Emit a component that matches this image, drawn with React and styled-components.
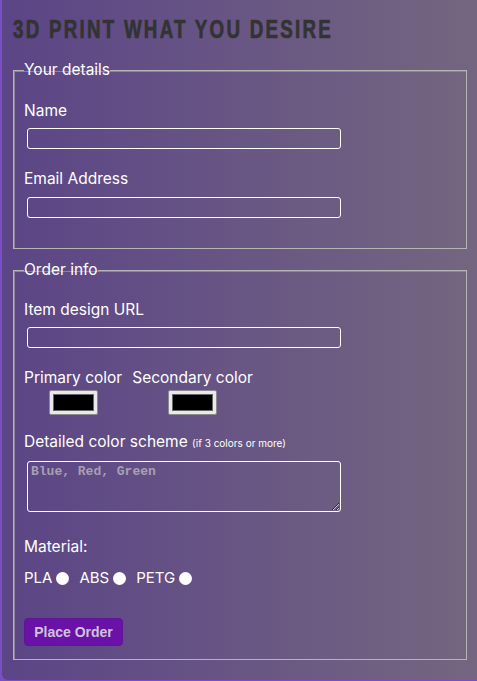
import React from 'react';
import styled, { createGlobalStyle } from 'styled-components';

const Global = createGlobalStyle`
  html, body {
    margin: 0;
    padding: 0;
    background: #7a4fc6;
  }
`;

const Page = styled.div`
  margin: 0 0 2px 2px;
  min-height: 679px;
  box-sizing: border-box;
  padding: 0 10px 20px 11px;
  border-bottom-left-radius: 6px;
  background: linear-gradient(90deg, #5b4586 0%, #675484 45%, #746680 100%);
  font-family: Inter, "Open Sans", sans-serif;
  color: #fff;
`;

const Title = styled.h1`
  margin: 0;
  padding: 15px 0 18px 0;
  font-family: "Liberation Sans", Arial, sans-serif;
  font-weight: 700;
  font-size: 25px;
  line-height: 28px;
  letter-spacing: 3px;
  color: #333;
  -webkit-text-stroke: 0.7px #333;
  text-transform: uppercase;
  white-space: nowrap;
  transform: scaleX(0.75);
  transform-origin: left center;
`;

const Set = styled.fieldset`
  margin: 0 0 ${p => p.$gap || 0}px 0;
  padding: 0 10px ${p => p.$bottom}px 10px;
  border: 1px solid #b5b5b5;
  box-shadow: inset 1px 1px 0 #8d8592;
  min-width: 0;
`;

const Legend = styled.legend`
  padding: 0;
  margin-left: 0;
  font-size: 15.5px;
  line-height: 18px;
  color: #fff;
`;

const Label = styled.div`
  margin-top: ${p => p.$top}px;
  padding-top: 1px;
  font-size: 15.5px;
  line-height: 18px;
  color: #fff;
`;

const Small = styled.span`
  font-size: 10px;
`;

const TextInput = styled.input`
  display: block;
  box-sizing: border-box;
  width: 314px;
  height: 21px;
  margin: ${p => p.$top}px 0 0 3px;
  background: transparent;
  border: 1px solid #fff;
  border-radius: 3px;
  color: #fff;
  outline: none;
`;

const TextArea = styled.textarea`
  display: block;
  box-sizing: border-box;
  width: 314px;
  height: 51px;
  margin: 9px 0 0 3px;
  padding: 2px 3px;
  background: transparent;
  border: 1px solid #fff;
  border-radius: 3px;
  font-family: "Liberation Mono", monospace;
  font-size: 13px;
  font-weight: 700;
  color: #fff;
  resize: vertical;
  &::placeholder {
    color: #a99fb3;
  }
`;

const Colors = styled.div`
  display: flex;
  gap: 10px;
  margin-top: 20px;
`;

const ColorCol = styled.div`
  display: flex;
  flex-direction: column;
  align-items: center;
`;

const Swatch = styled.div`
  box-sizing: border-box;
  width: 49px;
  height: 25px;
  margin-top: 3px;
  padding: 3px 3px;
  background: #e9e9ed;
  border: 1px solid #8c8c8c;
  border-radius: 2px;
  &::after {
    content: '';
    display: block;
    height: 100%;
    background: #000;
    border: 1px solid #666;
    box-sizing: border-box;
  }
`;

const Radios = styled.div`
  display: flex;
  align-items: center;
  margin-top: 13px;
  font-size: 15px;
  line-height: 18px;
`;

const RadioLabel = styled.label`
  display: flex;
  align-items: center;
  margin-right: 10px;
`;

const Radio = styled.span`
  display: inline-block;
  width: 13px;
  height: 13px;
  margin-left: 4px;
  border-radius: 50%;
  background: #fff;
`;

const Button = styled.button`
  display: block;
  margin-top: 31px;
  width: 99px;
  height: 28px;
  padding: 0;
  background: #6a11a8;
  border: 1px solid #5e1596;
  border-radius: 4px;
  color: #cfc4d9;
  font-family: "Liberation Sans", Arial, sans-serif;
  font-weight: 700;
  font-size: 14px;
`;

export default function App() {
  return (
    <>
      <Global />
      <Page>
        <Title>3D Print What You Desire</Title>
        <Set $gap={12} $bottom={30}>
          <Legend>Your details</Legend>
          <Label $top={22}>Name</Label>
          <TextInput $top={8} />
          <Label $top={20}>Email Address</Label>
          <TextInput $top={9} />
        </Set>
        <Set $bottom={13}>
          <Legend>Order info</Legend>
          <Label $top={21}>Item design URL</Label>
          <TextInput $top={8} />
          <Colors>
            <ColorCol>
              <Label $top={0}>Primary color</Label>
              <Swatch />
            </ColorCol>
            <ColorCol>
              <Label $top={0}>Secondary color</Label>
              <Swatch />
            </ColorCol>
          </Colors>
          <Label $top={17}>
            Detailed color scheme <Small>(if 3 colors or more)</Small>
          </Label>
          <TextArea placeholder="Blue, Red, Green" />
          <Label $top={25}>Material:</Label>
          <Radios>
            <RadioLabel>PLA<Radio /></RadioLabel>
            <RadioLabel>ABS<Radio /></RadioLabel>
            <RadioLabel>PETG<Radio /></RadioLabel>
          </Radios>
          <Button>Place Order</Button>
        </Set>
      </Page>
    </>
  );
}
